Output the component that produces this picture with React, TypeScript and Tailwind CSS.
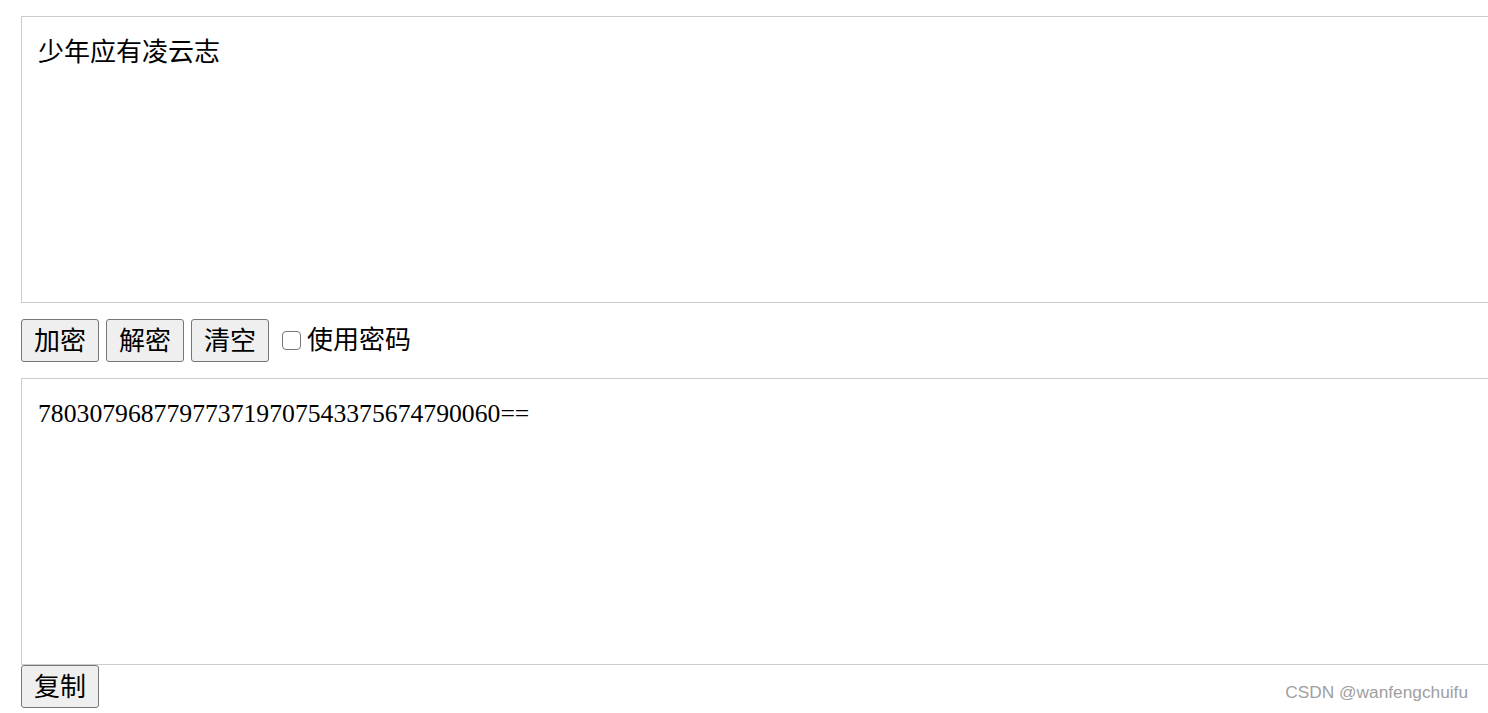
import { useState } from "react";

const sansFont = "font-['Liberation_Sans','Noto_Sans_CJK_SC',sans-serif]";
const serifFont = "font-['Liberation_Serif','Noto_Sans_CJK_SC',serif]";

function Btn({ label }: { label: string }) {
  return (
    <button
      className={`${sansFont} h-[43px] w-[78px] shrink-0 rounded-[3px] border border-[#767676] bg-[#efefef] text-[26px] leading-none text-black`}
    >
      {label}
    </button>
  );
}

export default function App() {
  const [input, setInput] = useState("少年应有凌云志");
  const [output, setOutput] = useState("780307968779773719707543375674790060==");
  const [usePwd, setUsePwd] = useState(false);

  return (
    <div className="relative h-[713px] w-[1488px] overflow-hidden bg-white pl-[21px] pt-[16px]">
      <textarea
        value={input}
        onChange={(e) => setInput(e.target.value)}
        className={`${serifFont} block h-[287px] w-[1500px] resize-none border border-[#cccccc] p-4 text-[26px] leading-[1.5] text-black outline-none`}
      />

      <div className="mt-4 flex h-[43px] items-center gap-[7px]">
        <Btn label="加密" />
        <Btn label="解密" />
        <Btn label="清空" />
        <label className={`${sansFont} ml-[6px] flex items-center gap-[6px] text-[26px] text-black`}>
          <input
            type="checkbox"
            checked={usePwd}
            onChange={(e) => setUsePwd(e.target.checked)}
            className="h-[19px] w-[19px] shrink-0 appearance-none rounded-[4px] border border-[#767676] bg-white"
          />
          使用密码
        </label>
      </div>

      <textarea
        value={output}
        onChange={(e) => setOutput(e.target.value)}
        className={`${serifFont} mt-4 block h-[287px] w-[1500px] resize-none border border-[#cccccc] p-4 text-[25.7px] leading-[1.5] text-black outline-none`}
      />
      <Btn label="复制" />

      <div className="absolute bottom-[7px] right-[20px] font-['Liberation_Sans',sans-serif] text-[17.3px] text-[#a0a0a0]">
        CSDN @wanfengchuifu
      </div>
    </div>
  );
}
